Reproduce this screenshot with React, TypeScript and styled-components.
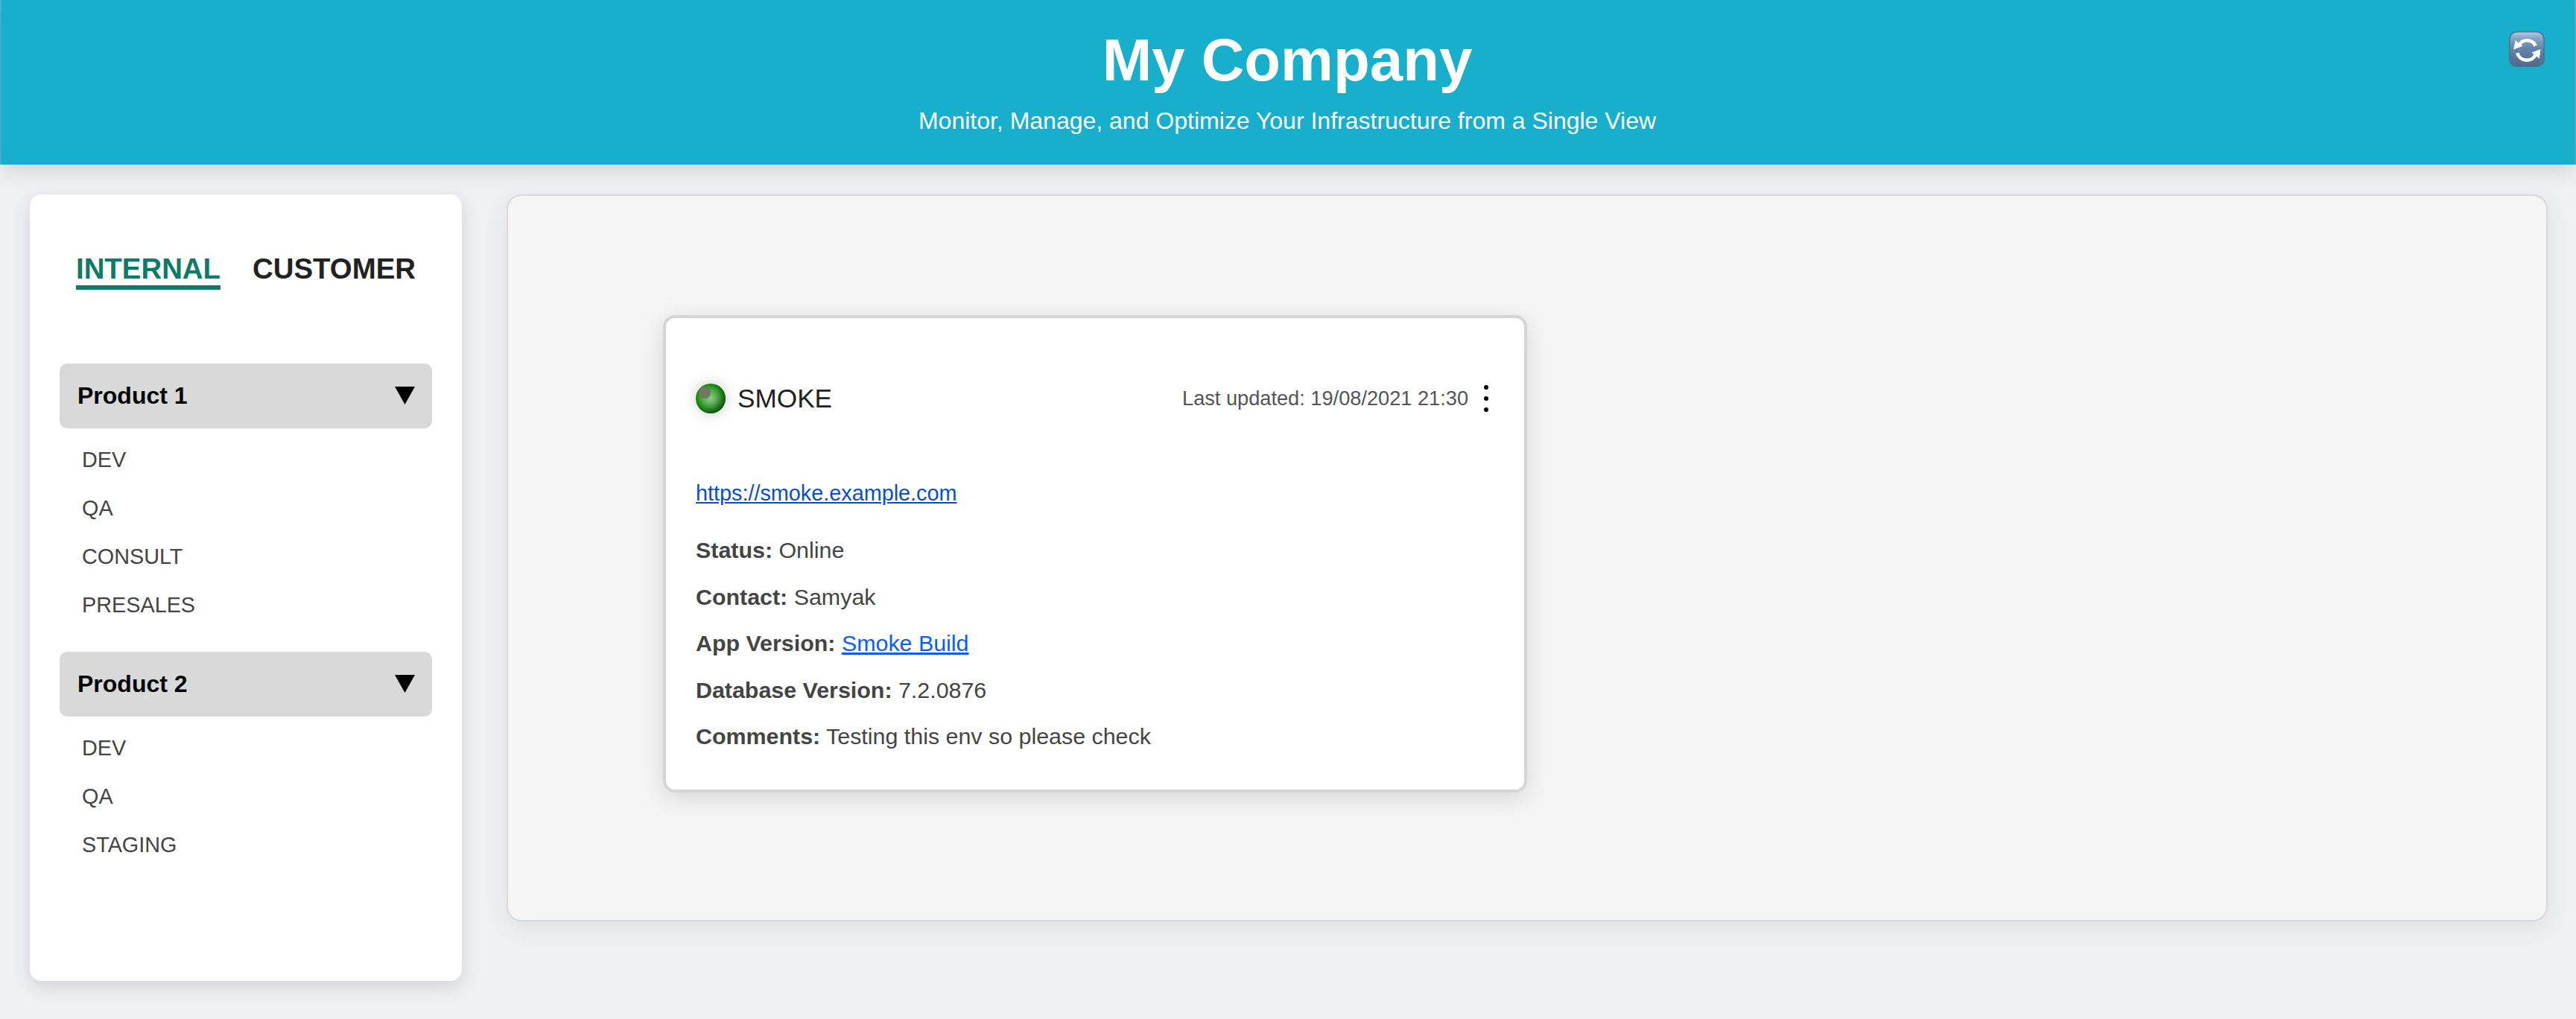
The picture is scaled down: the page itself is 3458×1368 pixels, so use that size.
import React from "react";
import styled, { createGlobalStyle } from "styled-components";

const GlobalStyle = createGlobalStyle`
  * { box-sizing: border-box; }
  body {
    margin: 0;
    background: #eff0f4;
    font-family: "Liberation Sans", Arial, Helvetica, sans-serif;
  }
`;

const Page = styled.div`
  width: 3458px;
  height: 1368px;
  padding: 0 2px;
  display: flex;
  flex-direction: column;
  overflow: hidden;
  background: linear-gradient(#47b8d1, #47b8d1) 0 0 / 100% 221px no-repeat, #eff0f4;
`;

const Header = styled.header`
  position: relative;
  flex: none;
  height: 221px;
  padding: 35px 2px 0 0;
  background: #17afcb;
  color: #fff;
  text-align: center;
  box-shadow: 0 8px 24px rgba(0, 0, 0, 0.12);
`;

const Title = styled.h1`
  margin: 0;
  font-size: 79.8px;
  line-height: 92px;
`;

const Subtitle = styled.p`
  margin: 17px 0 0;
  font-size: 32px;
  line-height: 36px;
`;

const RefreshButton = styled.button`
  position: absolute;
  top: 42px;
  right: 40px;
  width: 48px;
  height: 48px;
  padding: 0;
  border: 0;
  background: none;
  svg { display: block; }
`;

const Body = styled.div`
  flex: 1;
  display: flex;
  align-items: flex-start;
  gap: 60px;
  padding: 40px 36px 0 38px;
`;

const Sidebar = styled.aside`
  flex: none;
  width: 580px;
  height: 1056px;
  padding: 77px 40px 0;
  border-radius: 16px;
  background: #fff;
  box-shadow: 0 8px 24px rgba(0, 0, 0, 0.12);
`;

const Tabs = styled.nav`
  display: flex;
  justify-content: center;
  gap: 43px;
  height: 150px;
`;

const Tab = styled.span<{ $active?: boolean }>`
  height: 51px;
  font-size: 38.4px;
  font-weight: 700;
  line-height: 45px;
  color: ${(p) => (p.$active ? "#0f7a66" : "#222")};
  border-bottom: 6px solid ${(p) => (p.$active ? "#0f7a66" : "transparent")};
`;

const Group = styled.section`
  margin-bottom: 30px;
`;

const GroupHeader = styled.div`
  display: flex;
  align-items: center;
  justify-content: space-between;
  height: 87px;
  padding: 0 23px 1px 24px;
  border-radius: 10px;
  background: #d9d9d9;
  color: #000;
  font-size: 32px;
  font-weight: 700;
`;

const EnvList = styled.ul`
  margin: 0;
  padding: 10px 0 0 30px;
  list-style: none;
`;

const EnvItem = styled.li`
  height: 65px;
  font-size: 28.8px;
  line-height: 64px;
  color: #444;
`;

const Panel = styled.main`
  flex: 1;
  height: 976px;
  padding: 160px 208px;
  border: 2px solid #d8d9da;
  border-radius: 20px;
  background: #f5f5f5;
  box-shadow: 0 8px 32px rgba(0, 0, 0, 0.07);
`;

const Card = styled.article`
  width: 1160px;
  height: 641px;
  padding: 88px 40px 0;
  border: 4px solid #d5d5d5;
  border-radius: 16px;
  background: #fff;
  box-shadow: 0 8px 32px rgba(0, 0, 0, 0.12);
`;

const CardHeader = styled.div`
  display: flex;
  align-items: center;
  height: 40px;
`;

const StatusLight = styled.span`
  position: relative;
  width: 40px;
  height: 40px;
  margin-right: 16px;
  border-radius: 50%;
  background: radial-gradient(circle at 50% 50%, #8fca8b 0, #169a0c 20px);
  box-shadow: 0 0 20px rgba(0, 0, 0, 0.2), inset -4px -4px 12px rgba(0, 0, 0, 0.5);
  &::after {
    content: "";
    position: absolute;
    left: 4px;
    top: 4px;
    width: 16px;
    height: 16px;
    border-radius: 50%;
    background: #70785f;
  }
`;

const EnvName = styled.span`
  flex: 1;
  font-size: 35.2px;
  color: #222;
`;

const Updated = styled.span`
  font-size: 27.2px;
  color: #555;
`;

const MenuButton = styled.button`
  display: flex;
  flex-direction: column;
  align-items: center;
  gap: 9px;
  width: 6px;
  margin: 0 8px 0 21px;
  padding: 0;
  border: 0;
  background: none;
`;

const Dot = styled.i`
  width: 6px;
  height: 6px;
  border-radius: 50%;
  background: #000;
`;

const SiteLink = styled.a`
  display: block;
  margin-top: 90px;
  font-size: 28.8px;
  line-height: 34px;
  color: #0a4fc4;
`;

const Details = styled.div`
  margin-top: 28px;
`;

const Detail = styled.p`
  margin: 0;
  height: 62.5px;
  font-size: 30.4px;
  line-height: 62px;
  color: #444;
`;

const BuildLink = styled.a`
  color: #0b5cff;
`;

function RefreshIcon() {
  return (
    <svg width="48" height="48" viewBox="0 0 48 48">
      <defs>
        <linearGradient id="tile" x1="0" y1="0" x2="0" y2="1">
          <stop offset="0" stopColor="#b5cbdb" />
          <stop offset="0.2" stopColor="#84a3c1" />
          <stop offset="0.5" stopColor="#6283aa" />
          <stop offset="1" stopColor="#506888" />
        </linearGradient>
      </defs>
      <rect x="0.8" y="0.8" width="46.4" height="46.4" rx="10" fill="url(#tile)" stroke="#4c7294" strokeWidth="1.6" />
      <path d="M13.5 18.5A12.6 12.6 0 0 1 35.8 19.5" fill="none" stroke="#fff" strokeWidth="4.6" />
      <path d="M11.2 29A13.2 13.2 0 0 0 36 31" fill="none" stroke="#fff" strokeWidth="4.6" />
      <path d="M8.6 12.2L6.2 24.6L18.4 19.8Z" fill="#fff" />
      <path d="M42.5 24L40.8 36.4L30.4 28.6Z" fill="#fff" />
    </svg>
  );
}

function Arrow() {
  return (
    <svg width="27" height="24" viewBox="0 0 27 24">
      <path d="M0 0H27L13.5 24Z" fill="#000" />
    </svg>
  );
}

const groups = [
  { name: "Product 1", envs: ["DEV", "QA", "CONSULT", "PRESALES"] },
  { name: "Product 2", envs: ["DEV", "QA", "STAGING"] },
];

export default function App() {
  return (
    <Page>
      <GlobalStyle />
      <Header>
        <Title>My Company</Title>
        <Subtitle>Monitor, Manage, and Optimize Your Infrastructure from a Single View</Subtitle>
        <RefreshButton aria-label="Refresh">
          <RefreshIcon />
        </RefreshButton>
      </Header>
      <Body>
        <Sidebar>
          <Tabs>
            <Tab $active>INTERNAL</Tab>
            <Tab>CUSTOMER</Tab>
          </Tabs>
          {groups.map((g) => (
            <Group key={g.name}>
              <GroupHeader>
                {g.name}
                <Arrow />
              </GroupHeader>
              <EnvList>
                {g.envs.map((e) => (
                  <EnvItem key={e}>{e}</EnvItem>
                ))}
              </EnvList>
            </Group>
          ))}
        </Sidebar>
        <Panel>
          <Card>
            <CardHeader>
              <StatusLight />
              <EnvName>SMOKE</EnvName>
              <Updated>Last updated: 19/08/2021 21:30</Updated>
              <MenuButton aria-label="Menu">
                <Dot />
                <Dot />
                <Dot />
              </MenuButton>
            </CardHeader>
            <SiteLink href="#">https://smoke.example.com</SiteLink>
            <Details>
              <Detail><b>Status:</b> Online</Detail>
              <Detail><b>Contact:</b> Samyak</Detail>
              <Detail><b>App Version:</b> <BuildLink href="#">Smoke Build</BuildLink></Detail>
              <Detail><b>Database Version:</b> 7.2.0876</Detail>
              <Detail><b>Comments:</b> Testing this env so please check</Detail>
            </Details>
          </Card>
        </Panel>
      </Body>
    </Page>
  );
}
